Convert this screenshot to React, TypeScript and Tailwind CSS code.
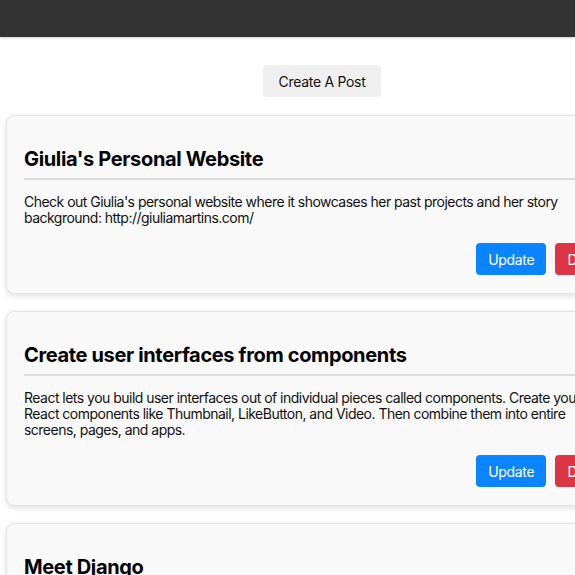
import React from 'react';

type Post = { id: number; title: string; body: string };

const posts: Post[] = [
  {
    id: 1,
    title: "Giulia's Personal Website",
    body: "Check out Giulia's personal website where it showcases her past projects and her story background: http://giuliamartins.com/",
  },
  {
    id: 2,
    title: 'Create user interfaces from components',
    body: 'React lets you build user interfaces out of individual pieces called components. Create your own React components like Thumbnail, LikeButton, and Video. Then combine them into entire screens, pages, and apps.',
  },
  {
    id: 3,
    title: 'Meet Django',
    body: 'Django is a high-level Python web framework that encourages rapid development and clean, pragmatic design.',
  },
];

const PostCard: React.FC<{ post: Post }> = ({ post }) => (
  <div className="mx-[6px] bg-[#f9f9f9] border border-[#e4e4e4] rounded-lg shadow-[0_2px_6px_rgba(0,0,0,0.12)] px-[17px] pt-[31px] pb-[18px]">
    <h2 className="text-[20px] leading-[24px] font-bold text-black tracking-[-0.35px]">{post.title}</h2>
    <div className="h-[2px] bg-[#dcdcdc] mt-[7px] mb-[14px]"></div>
    <p className="text-[14px] leading-[16px] text-[#111] tracking-[-0.52px]">{post.body}</p>
    <div className="flex justify-end gap-[9px] mt-[17px]">
      <button className="h-[32px] px-[12px] rounded-[4px] bg-[#0a84ff] text-white text-[14px] tracking-[-0.3px]">Update</button>
      <button className="h-[32px] px-[12px] rounded-[4px] bg-[#dc3545] text-white text-[14px] tracking-[-0.3px]">Delete</button>
    </div>
  </div>
);

export default function App() {
  return (
    <div className="w-[575px] h-[575px] overflow-hidden bg-white font-['Inter',sans-serif]">
      <div className="h-[37px] bg-[#333333] shadow-[0_1px_2px_rgba(0,0,0,0.2)]"></div>
      <div className="w-[644px]">
        <div className="flex justify-center pt-[28px] pb-[18px]">
          <button className="h-[32px] px-[16px] rounded-[4px] bg-[#efefef] text-[14px] text-[#111] tracking-[-0.3px]">Create A Post</button>
        </div>
        <div className="flex flex-col gap-[17px]">
          {posts.map(p => (
            <PostCard key={p.id} post={p} />
          ))}
        </div>
      </div>
    </div>
  );
}
